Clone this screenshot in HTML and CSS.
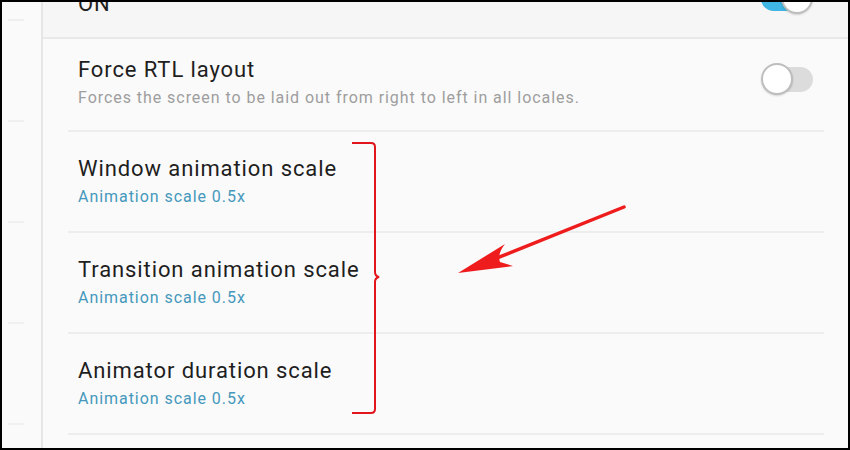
FILE: index.html
```html
<!DOCTYPE html>
<html lang="en-us">
<head>
  <meta charset="utf-8">
  <title>Developer options</title>
  <link rel="stylesheet" href="styles.css">
</head>
<body>
  <div class="frame">
    <div class="side">
      <span class="tick"></span>
      <span class="tick"></span>
      <span class="tick"></span>
      <span class="tick"></span>
      <span class="tick"></span>
    </div>
    <div class="main">
      <div class="topbar">
        <span class="title on-label">ON</span>
        <span class="switch switch-on"><span class="knob"></span></span>
      </div>
      <div class="list">
        <div class="row first">
          <div class="texts">
            <div class="title">Force RTL layout</div>
            <div class="sub">Forces the screen to be laid out from right to left in all locales.</div>
          </div>
          <span class="switch"><span class="knob"></span></span>
        </div>
        <div class="row">
          <div class="texts">
            <div class="title">Window animation scale</div>
            <div class="sub blue">Animation scale 0.5x</div>
          </div>
        </div>
        <div class="row">
          <div class="texts">
            <div class="title">Transition animation scale</div>
            <div class="sub blue">Animation scale 0.5x</div>
          </div>
        </div>
        <div class="row">
          <div class="texts">
            <div class="title">Animator duration scale</div>
            <div class="sub blue">Animation scale 0.5x</div>
          </div>
        </div>
      </div>
    </div>
    <svg class="marks" width="850" height="450" viewBox="0 0 850 450">
      <path d="M352 143 H371 Q375 143 375 147 V272 Q375 276 379 277 Q375 278 375 282 V409 Q375 413 371 413 H352" fill="none" stroke="#e2141c" stroke-width="2"/>
      <line x1="624" y1="207" x2="492" y2="260" stroke="#ee1c1c" stroke-width="3.5" stroke-linecap="round"/>
      <path d="M458 273 L505 244 Q497 254 500 262 L513 266 Z" fill="#ee1c1c"/>
    </svg>
  </div>
</body>
</html>
```

FILE: styles.css
```css
body {
  margin: 0;
  font-family: Roboto, "Noto Sans", sans-serif;
}
.frame {
  position: relative;
  width: 850px;
  height: 450px;
  box-sizing: border-box;
  border: 2px solid #000;
  background: #fafafa;
  display: flex;
  overflow: hidden;
}
.side {
  width: 41px;
  border-right: 2px solid #e6e6e6;
  display: flex;
  flex-direction: column;
  gap: 99px;
  padding: 17px 0 0 6px;
  box-sizing: border-box;
}
.tick {
  display: block;
  width: 16px;
  height: 2px;
  background: #f0f0f0;
}
.main {
  flex: 1;
  display: flex;
  flex-direction: column;
}
.topbar {
  height: 35px;
  background: #f6f6f6;
  border-bottom: 2px solid #e9e9e9;
  display: flex;
  justify-content: space-between;
  align-items: flex-start;
  padding: 0 24px 0 35px;
}
.on-label {
  margin-top: -13px;
  line-height: 24px;
}
.topbar .switch {
  margin-top: -16px;
}
.list {
  margin: 0 24px 0 25px;
}
.row {
  height: 101px;
  box-sizing: border-box;
  border-bottom: 2px solid #ededed;
  padding: 22px 0 0 10px;
  display: flex;
  justify-content: space-between;
}
.row.first {
  height: 93px;
  padding-top: 16px;
}
.title {
  font-size: 22px;
  letter-spacing: 0.9px;
  color: #1e1e1e;
  line-height: 30px;
}
.sub {
  font-size: 16px;
  letter-spacing: 0.95px;
  color: #9e9e9e;
  line-height: 26px;
}
.sub.blue {
  color: #4598bc;
}
.switch {
  position: relative;
  flex: none;
  width: 52px;
  height: 25px;
  margin: 12px 11px 0 0;
}
.switch::before {
  content: "";
  position: absolute;
  left: 15px;
  right: 0;
  top: 0;
  bottom: 0;
  border-radius: 13px;
  background: #dcdcdc;
}
.knob {
  position: absolute;
  left: 0;
  top: -4px;
  width: 28px;
  height: 28px;
  border-radius: 50%;
  background: #fff;
  border: 2px solid #bdbdbd;
  box-shadow: 0 1px 2px rgba(0, 0, 0, 0.15);
}
.switch-on::before {
  left: 0;
  right: 15px;
  background: #3fb6e3;
}
.switch-on .knob {
  left: auto;
  right: 0;
}
.marks {
  position: absolute;
  left: -2px;
  top: -2px;
  pointer-events: none;
}
```
